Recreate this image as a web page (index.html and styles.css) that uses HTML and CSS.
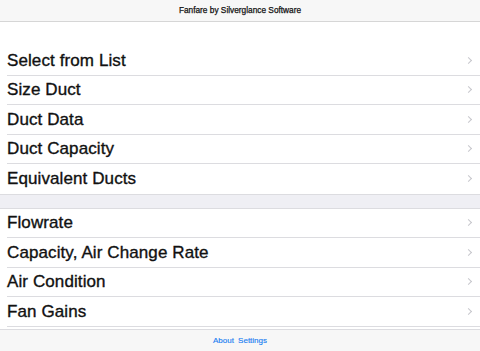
FILE: index.html
```html
<!DOCTYPE html>
<html lang="en">

<head>
    <meta charset="UTF-8">
    <meta name="viewport" content="width=device-width, initial-scale=1.0">
    <title>Fanfare</title>
    <link rel="stylesheet" href="styles.css">
</head>

<body>
    <div class="app">
        <div class="nav-bar">Fanfare by Silverglance Software</div>

        <div class="content">
            <ul class="table-group first">
                <li class="cell">Select from List<span class="chevron"></span></li>
                <li class="cell">Size Duct<span class="chevron"></span></li>
                <li class="cell">Duct Data<span class="chevron"></span></li>
                <li class="cell">Duct Capacity<span class="chevron"></span></li>
                <li class="cell">Equivalent Ducts<span class="chevron"></span></li>
            </ul>
            <div class="group-gap"></div>
            <ul class="table-group">
                <li class="cell">Flowrate<span class="chevron"></span></li>
                <li class="cell">Capacity, Air Change Rate<span class="chevron"></span></li>
                <li class="cell">Air Condition<span class="chevron"></span></li>
                <li class="cell">Fan Gains<span class="chevron"></span></li>
            </ul>
        </div>

        <div class="tool-bar">
            <a href="#">About</a>
            <a href="#">Settings</a>
        </div>
    </div>
</body>

</html>
```

FILE: styles.css
```css
html, body {
    margin: 0;
    padding: 0;
}

body {
    font-family: "Liberation Sans", Arial, sans-serif;
    background-color: #ffffff;
    color: #000;
}

.app {
    width: 480px;
    height: 351px;
    display: flex;
    flex-direction: column;
    overflow: hidden;
}

.nav-bar {
    height: 21px;
    flex-shrink: 0;
    background: #f7f7f7;
    border-bottom: 1px solid #d6d6d6;
    font-size: 8.3px;
    line-height: 21px;
    text-align: center;
    color: #111;
    -webkit-text-stroke: 0.25px #111;
}

.content {
    flex: 1;
    overflow: hidden;
}

.table-group {
    list-style: none;
    margin: 0;
    padding: 0;
    background: #fff;
}

.table-group.first {
    margin-top: 24px;
}

.cell {
    position: relative;
    height: 29.5px;
    display: flex;
    align-items: center;
    padding-left: 7px;
    font-size: 17px;
    letter-spacing: 0.1px;
    color: #111;
    -webkit-text-stroke: 0.35px #111;
}

.cell::after {
    content: "";
    position: absolute;
    left: 7px;
    right: 0;
    bottom: 0;
    border-bottom: 1px solid #dcdce0;
}

.table-group.first .cell:last-child::after {
    display: none;
}

.chevron {
    position: absolute;
    right: 9px;
    top: 50%;
    width: 4px;
    height: 4px;
    margin-top: -3px;
    border-top: 1px solid #c7c7cc;
    border-right: 1px solid #c7c7cc;
    transform: rotate(45deg);
}

.group-gap {
    height: 13px;
    background: #efeff4;
    border-top: 1px solid #dcdce0;
    border-bottom: 1px solid #dcdce0;
}

.tool-bar {
    height: 21px;
    flex-shrink: 0;
    background: #f7f7f7;
    border-top: 1px solid #dcdce0;
    text-align: center;
    font-size: 8px;
    line-height: 21px;
}

.tool-bar a {
    color: #1a7ef2;
    text-decoration: none;
    margin: 0 1px;
    -webkit-text-stroke: 0.15px #1a7ef2;
}
```
